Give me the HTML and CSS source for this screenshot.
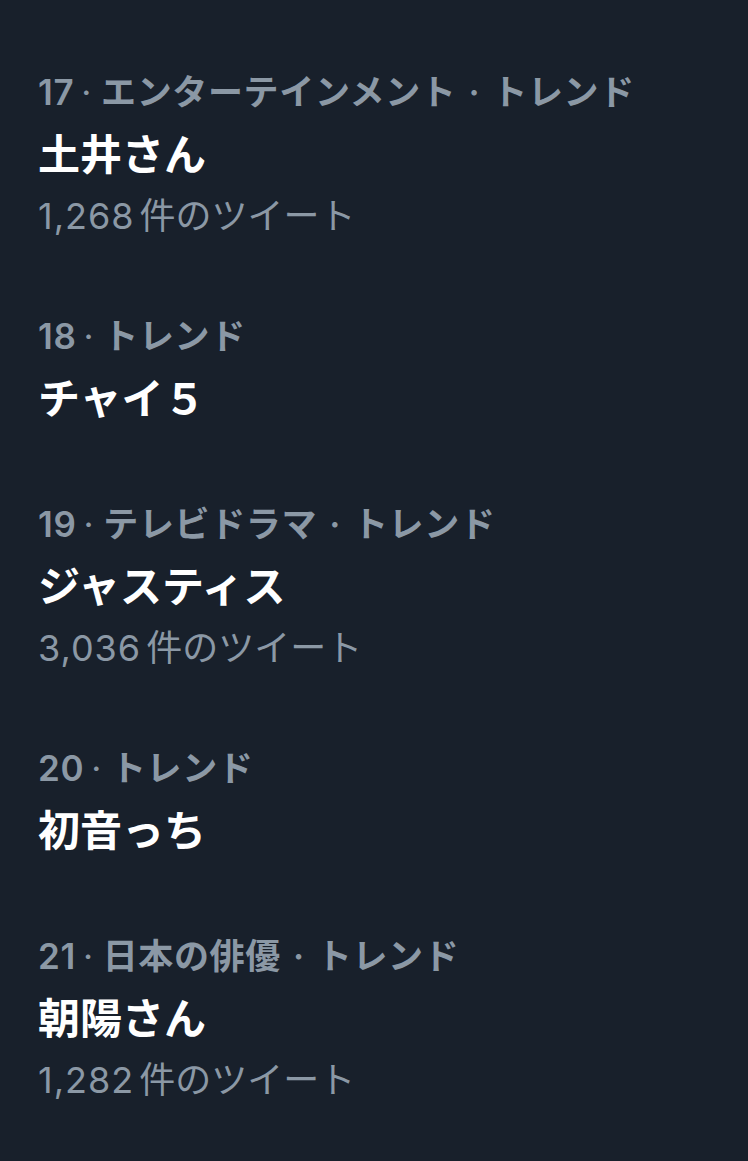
FILE: index.html
```html
<!DOCTYPE html>
<html lang="ja">

<head>
    <meta charset="UTF-8">
    <meta name="viewport" content="width=device-width, initial-scale=1.0">
    <title>トレンド</title>
    <link rel="stylesheet" href="styles.css">
</head>

<body>
    <div class="trends">
        <div class="trend">
            <p class="meta">17<span class="dot">·</span>エンターテインメント<span class="sep">·</span>トレンド</p>
            <p class="name">土井さん</p>
            <p class="count"><span class="num">1,268</span>件のツイート</p>
        </div>
        <div class="trend">
            <p class="meta">18<span class="dot">·</span>トレンド</p>
            <p class="name">チャイ５</p>
        </div>
        <div class="trend">
            <p class="meta">19<span class="dot">·</span>テレビドラマ<span class="sep">·</span>トレンド</p>
            <p class="name">ジャスティス</p>
            <p class="count"><span class="num">3,036</span>件のツイート</p>
        </div>
        <div class="trend">
            <p class="meta">20<span class="dot">·</span>トレンド</p>
            <p class="name">初音っち</p>
        </div>
        <div class="trend">
            <p class="meta">21<span class="dot">·</span>日本の俳優<span class="sep">·</span>トレンド</p>
            <p class="name">朝陽さん</p>
            <p class="count"><span class="num">1,282</span>件のツイート</p>
        </div>
    </div>
</body>

</html>
```

FILE: styles.css
```css
* {
    padding: 0;
    margin: 0;
    box-sizing: border-box;
}

body {
    background-color: #18202b;
    color: #ffffff;
    font-family: "Inter", "Noto Sans CJK JP", sans-serif;
}

.trends {
    padding: 31px 38px;
}

.trend {
    padding: 31px 0;
}

.meta {
    color: #8b98a5;
    font-size: 35px;
    font-weight: 600;
    line-height: 60px;
    letter-spacing: 0.65px;
}

.dot {
    font-weight: 400;
    margin: 0 9px 0 7px;
}

.sep {
    margin: 0 12px;
}

.name {
    font-size: 42px;
    font-weight: 700;
    line-height: 66px;
}

.count {
    color: #8b98a5;
    font-size: 36px;
    font-weight: 400;
    line-height: 56px;
}

.num {
    letter-spacing: 1px;
    margin-right: 5px;
}
```
